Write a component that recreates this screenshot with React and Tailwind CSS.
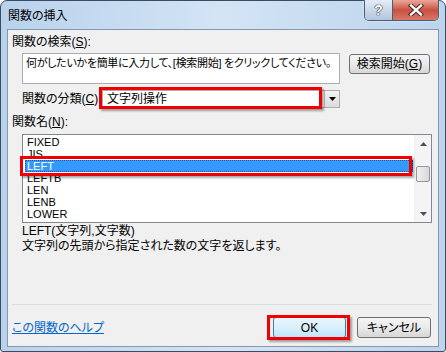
import React from 'react';

const items = ['FIXED', 'JIS', 'LEFT', 'LEFTB', 'LEN', 'LENB', 'LOWER'];

function TitleButtons() {
  return (
    <div className="flex h-[21px] mt-[-1px] border border-[#4b5d75] border-t-0 rounded-b-[5px] overflow-hidden shadow-[0_0_2px_rgba(255,255,255,0.8)]">
      <div className="w-[28px] flex items-center justify-center bg-gradient-to-b from-[#e4edf7] via-[#c9d8ea] to-[#b2c6de] border-r border-[#4b5d75]">
        <span className="text-[14px] leading-none font-bold text-white [text-shadow:0_0_1px_#223,0_0_1px_#223,0_0_1px_#223]">?</span>
      </div>
      <div className="w-[45px] flex items-center justify-center bg-gradient-to-b from-[#e9a99b] via-[#c9503f] to-[#d8786a]">
        <svg width="16" height="12" viewBox="0 0 16 12">
          <path d="M3 1.5 L13 10.5 M13 1.5 L3 10.5" stroke="#3a2020" strokeWidth="4.2" strokeLinecap="square" />
          <path d="M3 1.5 L13 10.5 M13 1.5 L3 10.5" stroke="#ffffff" strokeWidth="2.4" strokeLinecap="square" />
        </svg>
      </div>
    </div>
  );
}

function Button({ children, primary }) {
  return (
    <div
      className={
        'w-full h-full flex items-center justify-center rounded-[3px] border text-[12px] leading-none text-black whitespace-nowrap ' +
        (primary
          ? 'border-[#3c7fb1] bg-gradient-to-b from-[#eaf6fd] via-[#d9f0fc] to-[#bee6fd]'
          : 'border-[#707070] bg-gradient-to-b from-[#f4f4f4] via-[#eaeaea] to-[#d6d6d6]')
      }
    >
      {children}
    </div>
  );
}

export default function App() {
  return (
    <div className="w-[446px] h-[352px] overflow-hidden font-['Liberation_Sans','Noto_Sans_CJK_JP',sans-serif] [font-feature-settings:'palt']">
      <div className="w-[446px] h-[352px] flex flex-col border border-[#3b4c62] rounded-t-[7px] rounded-b-[3px] bg-gradient-to-r from-[#b9d2ec] via-[#d3e4f5] to-[#bcd4ec]">
        <div className="h-[28px] flex items-start justify-between pl-[7px] pr-[6px]">
          <span className="mt-[8px] text-[12px] leading-[14px] text-black">関数の挿入</span>
          <TitleButtons />
        </div>
        <div className="relative ml-[6px] mr-[6px] h-[318px] border border-[#8498b0] bg-[#f0f0f0] text-[12px] text-black">
          <div className="pt-[5px] pl-[4px] leading-[14px]">
            関数の検索(<span className="underline">S</span>):
          </div>
          <div className="flex items-start mt-[4px] ml-[14px]">
            <div className="w-[318px] h-[31px] border border-[#abadb3] bg-white px-[3px] pt-[2px] leading-[14px] text-[11px] tracking-[-0.3px] whitespace-nowrap overflow-hidden">
              何がしたいかを簡単に入力して、[検索開始] をクリックしてください。
            </div>
            <div className="ml-[9px] mt-[1px] w-[81px] h-[20px]">
              <Button>
                検索開始(<span className="underline">G</span>)
              </Button>
            </div>
          </div>
          <div className="flex items-center mt-[6px] ml-[14px] h-[18px]">
            <span className="w-[80px] leading-[14px]">
              関数の分類(<span className="underline">C</span>):
            </span>
            <div className="w-[238px] h-[18px] flex border border-[#abadb3] bg-white">
              <span className="flex-1 pl-[4px] leading-[16px]">文字列操作</span>
              <div className="w-[15px] h-[16px] flex items-center justify-center border-l border-[#c5c5c5] bg-gradient-to-b from-[#f4f4f4] to-[#dcdcdc]">
                <svg width="7" height="4" viewBox="0 0 7 4">
                  <path d="M0 0 H7 L3.5 4 Z" fill="#000" />
                </svg>
              </div>
            </div>
          </div>
          <div className="mt-[7px] pl-[4px] leading-[14px]">
            関数名(<span className="underline">N</span>):
          </div>
          <div className="mt-[5px] ml-[14px] w-[410px] h-[89px] flex border border-[#828790] bg-white">
            <div className="flex-1 pt-[1px] pl-[2px] pr-[1px]">
              {items.map((it) => (
                <div
                  key={it}
                  className={
                    'h-[12px] pl-[2px] text-[11px] leading-[12px] ' +
                    (it === 'LEFT' ? 'bg-[#3399ff] text-white outline outline-1 outline-dotted outline-[#1e5ea8] -outline-offset-1' : 'text-black')
                  }
                >
                  {it}
                </div>
              ))}
            </div>
            <div className="w-[17px] flex flex-col bg-[#f4f4f4] border-l border-[#f0f0f0]">
              <div className="h-[17px] flex items-center justify-center">
                <svg width="7" height="4" viewBox="0 0 7 4">
                  <path d="M0 4 H7 L3.5 0 Z" fill="#505050" />
                </svg>
              </div>
              <div className="h-[14px]" />
              <div className="mx-[1px] h-[16px] rounded-[2px] border border-[#979797] bg-gradient-to-r from-[#f1f1f1] to-[#d8d8d8]" />
              <div className="flex-1" />
              <div className="h-[17px] flex items-center justify-center">
                <svg width="7" height="4" viewBox="0 0 7 4">
                  <path d="M0 0 H7 L3.5 4 Z" fill="#505050" />
                </svg>
              </div>
            </div>
          </div>
          <div className="mt-[1px] ml-[14px] leading-[15px]">
            <div>LEFT(文字列,文字数)</div>
            <div>文字列の先頭から指定された数の文字を返します。</div>
          </div>
          <div className="mt-[50px] ml-[4px] w-[420px] h-[1px] bg-[#d5dfe5]" />
          <div className="flex items-center mt-[12px] pl-[4px]">
            <span className="text-[#0066cc] underline leading-[14px]">この関数のヘルプ</span>
            <div className="flex-1" />
            <div className="w-[73px] h-[21px]">
              <Button primary>OK</Button>
            </div>
            <div className="ml-[11px] mr-[7px] w-[74px] h-[21px]">
              <Button>キャンセル</Button>
            </div>
          </div>

          <div className="absolute left-[91px] top-[57px] w-[223px] h-[22px] border-[3px] border-[#f00000] shadow-[2px_2px_2px_rgba(0,0,0,0.35)]" />
          <div className="absolute left-[12px] top-[126px] w-[392px] h-[20px] border-[3px] border-[#f00000] shadow-[2px_2px_2px_rgba(0,0,0,0.35)]" />
          <div className="absolute left-[259px] top-[285px] w-[83px] h-[25px] border-[3px] border-[#f00000] shadow-[2px_2px_2px_rgba(0,0,0,0.35)]" />
        </div>
      </div>
    </div>
  );
}
